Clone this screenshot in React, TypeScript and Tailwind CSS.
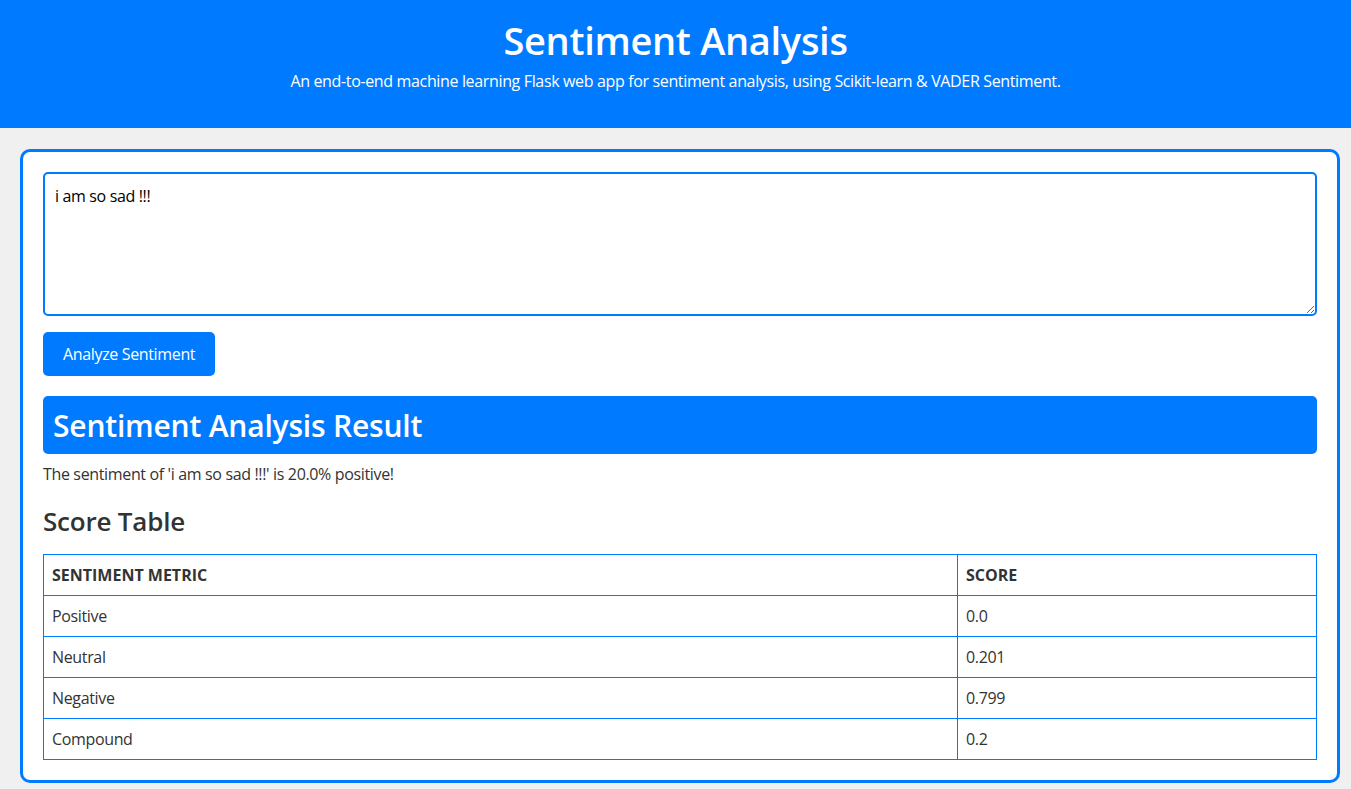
const rows = [
  { metric: 'Positive', score: '0.0' },
  { metric: 'Neutral', score: '0.201' },
  { metric: 'Negative', score: '0.799' },
  { metric: 'Compound', score: '0.2' },
];

export default function App() {
  return (
    <div className="min-h-screen bg-[#f0f0f0] font-['Open_Sans',sans-serif] tracking-[-0.35px] text-[#333]">
      <header className="h-[128px] bg-[#007bff] pt-[15px] text-center text-white">
        <h1 className="text-[38px] font-semibold leading-[50px] tracking-[-0.3px]">Sentiment Analysis</h1>
        <p className="mt-[4px] text-[16px] leading-6">
          An end-to-end machine learning Flask web app for sentiment analysis, using Scikit-learn &amp; VADER Sentiment.
        </p>
      </header>

      <main className="ml-[20px] mr-[11px] mt-[21px] rounded-[10px] border-[3px] border-[#007bff] bg-white p-[20px]">
        <textarea
          defaultValue="i am so sad !!!"
          className="block h-[144px] w-full resize-y rounded-[5px] border-2 border-[#007bff] px-[10px] pt-[10px] pb-[12px] text-[16px] leading-6 tracking-[-0.35px] text-black outline-none"
        />
        <button className="mt-[16px] h-[44px] rounded-[5px] bg-[#007bff] px-[20px] text-[16px] tracking-[-0.35px] text-white">
          Analyze Sentiment
        </button>

        <h2 className="mt-[20px] h-[58px] rounded-[5px] bg-[#007bff] px-[10px] text-[30px] font-semibold leading-[60px] tracking-[-0.2px] text-white">
          Sentiment Analysis Result
        </h2>
        <p className="mt-[8px] text-[16px] leading-6">The sentiment of 'i am so sad !!!' is 20.0% positive!</p>

        <h3 className="mt-[18px] text-[26px] font-semibold leading-[34px] tracking-[-0.2px]">Score Table</h3>

        <table className="mt-[16px] w-full border-collapse text-[16px]">
          <thead>
            <tr className="h-[41px]">
              <th className="border border-[#007bff] px-[8px] text-left font-bold uppercase tracking-normal">Sentiment Metric</th>
              <th className="w-[359px] border border-[#007bff] px-[8px] text-left font-bold uppercase tracking-normal">Score</th>
            </tr>
          </thead>
          <tbody>
            {rows.map((r) => (
              <tr key={r.metric} className="h-[41px]">
                <td className="border border-[#007bff] px-[8px]">{r.metric}</td>
                <td className="border border-[#007bff] px-[8px]">{r.score}</td>
              </tr>
            ))}
          </tbody>
        </table>
      </main>
    </div>
  );
}
